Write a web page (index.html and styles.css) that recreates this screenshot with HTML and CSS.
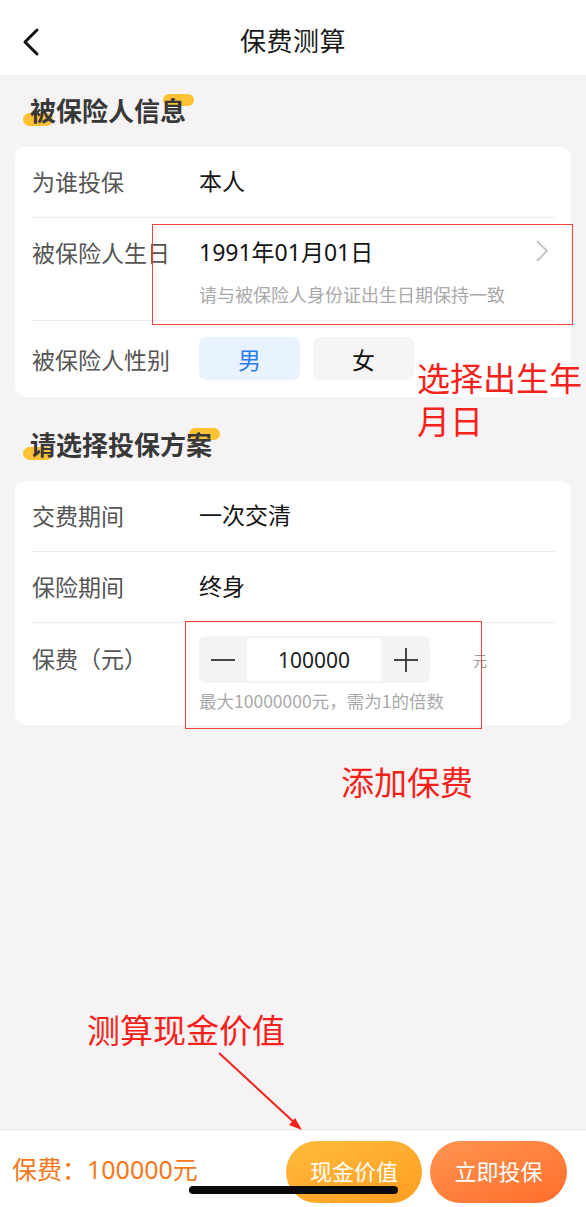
FILE: index.html
```html
<!DOCTYPE html>
<html lang="zh-CN">
<head>
<meta charset="utf-8">
<title>保费测算</title>
<link rel="stylesheet" href="styles.css">
</head>
<body>
<div class="page">
  <header class="topbar">
    <svg class="back" width="20" height="30" viewBox="0 0 20 30"><polyline points="15,3 3,15 15,27" fill="none" stroke="#111" stroke-width="3" stroke-linecap="round" stroke-linejoin="round"/></svg>
    <h1 class="topbar-title">保费测算</h1>
  </header>

  <main class="content">
    <h2 class="section-title first"><span class="hl">被保险人信息</span></h2>
    <section class="card">
      <div class="row row-simple">
        <div class="label">为谁投保</div>
        <div class="value">本人</div>
      </div>
      <div class="row row-birth">
        <div class="label">被保险人生日</div>
        <div class="value-col">
          <div class="value-line">
            <span class="value">1991年01月01日</span>
            <svg class="chev" width="14" height="24" viewBox="0 0 14 24"><polyline points="2,2 12,12 2,22" fill="none" stroke="#c4c4c4" stroke-width="1.8"/></svg>
          </div>
          <div class="hint">请与被保险人身份证出生日期保持一致</div>
        </div>
      </div>
      <div class="row row-gender">
        <div class="label">被保险人性别</div>
        <div class="choices">
          <span class="choice active">男</span>
          <span class="choice">女</span>
        </div>
      </div>
    </section>

    <h2 class="section-title second"><span class="hl">请选择投保方案</span></h2>
    <section class="card">
      <div class="row row-simple">
        <div class="label">交费期间</div>
        <div class="value">一次交清</div>
      </div>
      <div class="row row-simple">
        <div class="label">保险期间</div>
        <div class="value">终身</div>
      </div>
      <div class="row row-premium">
        <div class="label">保费（元）</div>
        <div class="value-col">
          <div class="stepper-line">
            <div class="stepper">
              <span class="step-btn"><svg width="26" height="26" viewBox="0 0 26 26"><line x1="1" y1="13" x2="25" y2="13" stroke="#333" stroke-width="1.8"/></svg></span>
              <span class="step-input">100000</span>
              <span class="step-btn"><svg width="26" height="26" viewBox="0 0 26 26"><line x1="1" y1="13" x2="25" y2="13" stroke="#333" stroke-width="1.8"/><line x1="13" y1="1" x2="13" y2="25" stroke="#333" stroke-width="1.8"/></svg></span>
            </div>
            <span class="unit">元</span>
          </div>
          <div class="hint">最大10000000元，需为1的倍数</div>
        </div>
      </div>
    </section>
  </main>

  <footer class="bottombar">
    <div class="total">保费：100000元</div>
    <div class="actions">
      <button class="btn btn-cash">现金价值</button>
      <button class="btn btn-buy">立即投保</button>
    </div>
    <div class="home-indicator"></div>
  </footer>

  <div class="mark mark-birth"></div>
  <div class="mark mark-premium"></div>
  <div class="note note-birth">选择出生年<br>月日</div>
  <div class="note note-premium">添加保费</div>
  <div class="note note-cash">测算现金价值</div>
  <svg class="arrow" width="100" height="90" viewBox="0 0 100 90">
    <line x1="2" y1="2" x2="80" y2="74" stroke="#f2231b" stroke-width="2"/>
    <polygon points="85,79 72,74 78,67" fill="#f2231b"/>
  </svg>
</div>
</body>
</html>
```

FILE: styles.css
```css
* { box-sizing: border-box; }
html, body { margin: 0; padding: 0; }
body {
  font-family: "Noto Sans", "Noto Sans CJK SC", sans-serif;
  background: #f5f3f4;
}
.page {
  position: relative;
  width: 586px;
  height: 1207px;
  overflow: hidden;
  display: flex;
  flex-direction: column;
  background: #f5f3f4;
}
.topbar {
  height: 75px;
  background: #fff;
  display: flex;
  align-items: center;
  justify-content: center;
  position: relative;
  flex: none;
}
.back {
  position: absolute;
  left: 22px;
  top: 27px;
}
.topbar-title {
  margin: 4px 0 0 0;
  font-size: 26px;
  font-weight: 400;
  color: #1a1a1a;
  font-family: "Noto Sans CJK SC", sans-serif;
  letter-spacing: 0.5px;
}
.content {
  flex: 1;
  padding: 0 15px;
}
.section-title {
  margin: 0;
  padding-left: 15px;
  font-size: 26px;
  line-height: 36px;
  font-weight: 700;
  color: #383838;
  font-family: "Noto Sans CJK SC", sans-serif;
}
.section-title.first { margin-top: 17px; margin-bottom: 19px; }
.section-title.second { margin-top: 29px; margin-bottom: 19px; }
.hl {
  position: relative;
  z-index: 0;
  display: inline-block;
}
.hl::before, .hl::after {
  content: "";
  position: absolute;
  z-index: -1;
  background: #fdc234;
  border-radius: 7px;
}
.hl::before { left: -7px; top: 21px; width: 30px; height: 13px; }
.hl::after { right: -8px; top: 2px; width: 31px; height: 12px; }

.card {
  background: #fff;
  border-radius: 10px;
  padding: 0 16px 0 17px;
}
.row {
  display: flex;
  border-bottom: 1px solid #ececec;
}
.row:last-child { border-bottom: none; }
.label {
  width: 167px;
  flex: none;
  font-size: 23px;
  line-height: 34px;
  color: #555;
  font-family: "Noto Sans CJK SC", sans-serif;
}
.value {
  font-size: 23px;
  line-height: 34px;
  color: #141414;
}
.row-simple {
  height: 71px;
  align-items: center;
  padding-bottom: 2px;
}
.row-birth {
  padding: 17px 0 13px;
  align-items: flex-start;
}
.value-col { flex: 1; }
.value-line {
  display: flex;
  align-items: center;
  justify-content: space-between;
}
.chev { margin-right: 6px; margin-top: -2px; }
.hint {
  margin-top: 12px;
  font-size: 18px;
  line-height: 26px;
  color: #a9a9a9;
  font-family: "Noto Sans CJK SC", sans-serif;
}
.row-gender {
  padding: 16px 0 17px;
  align-items: center;
}
.choices { display: flex; gap: 13px; }
.choice {
  width: 101px;
  height: 43px;
  border-radius: 7px;
  background: #f5f5f5;
  color: #111;
  font-size: 23px;
  display: flex;
  align-items: center;
  justify-content: center;
  font-family: "Noto Sans CJK SC", sans-serif;
}
.choice.active {
  background: #e8f3ff;
  color: #2a7cf6;
}
.row-premium {
  padding: 13px 0 11px;
  align-items: flex-start;
}
.row-premium .label { margin-top: 5px; }
.stepper-line {
  display: flex;
  align-items: center;
}
.stepper {
  width: 231px;
  height: 47px;
  border-radius: 7px;
  background: #f2f3f5;
  display: flex;
  align-items: stretch;
  padding: 2px 0;
}
.step-btn {
  width: 48px;
  display: flex;
  align-items: center;
  justify-content: center;
}
.step-btn:last-child { width: 49px; }
.step-input {
  width: 134px;
  background: #fff;
  display: flex;
  align-items: center;
  justify-content: center;
  font-size: 21px;
  color: #222;
}
.unit {
  margin-left: 43px;
  font-size: 14px;
  color: #999;
  font-family: "Noto Sans CJK SC", sans-serif;
}
.row-premium .hint { margin-top: 5px; font-size: 17.5px; }

.bottombar {
  position: relative;
  flex: none;
  height: 78px;
  background: #fff;
  border-top: 1px solid #e9e9e9;
  display: flex;
  align-items: center;
  justify-content: space-between;
  padding: 0 19px 0 12px;
}
.total {
  font-size: 25px;
  color: #f5781c;
  margin-top: -2px;
}
.actions {
  display: flex;
  gap: 8px;
  margin-top: 6px;
}
.btn {
  border: none;
  height: 62px;
  width: 136px;
  border-radius: 31px;
  color: #fff;
  font-size: 22px;
  line-height: 30px;
  font-family: "Noto Sans CJK SC", sans-serif;
  padding: 0 0 4px;
}
.btn-cash { background: linear-gradient(160deg, #ffbb3d 0%, #ff9d20 100%); }
.btn-buy { width: 137px; background: linear-gradient(160deg, #ff9550 0%, #ff6d2c 100%); }
.home-indicator {
  position: absolute;
  left: 189px;
  top: 56px;
  width: 209px;
  height: 8px;
  border-radius: 4px;
  background: #0a0a0a;
}

.mark {
  position: absolute;
  border: 1.5px solid #f04137;
}
.mark-birth { left: 152px; top: 224px; width: 421px; height: 101px; }
.mark-premium { left: 185px; top: 621px; width: 297px; height: 108px; }
.note {
  position: absolute;
  color: #f5221b;
  font-size: 33px;
  line-height: 43px;
  font-family: "Noto Sans CJK SC", sans-serif;
}
.note-birth { left: 417px; top: 356px; }
.note-premium { left: 341px; top: 760px; }
.note-cash { left: 87px; top: 1008px; }
.arrow {
  position: absolute;
  left: 217px;
  top: 1051px;
}
```
